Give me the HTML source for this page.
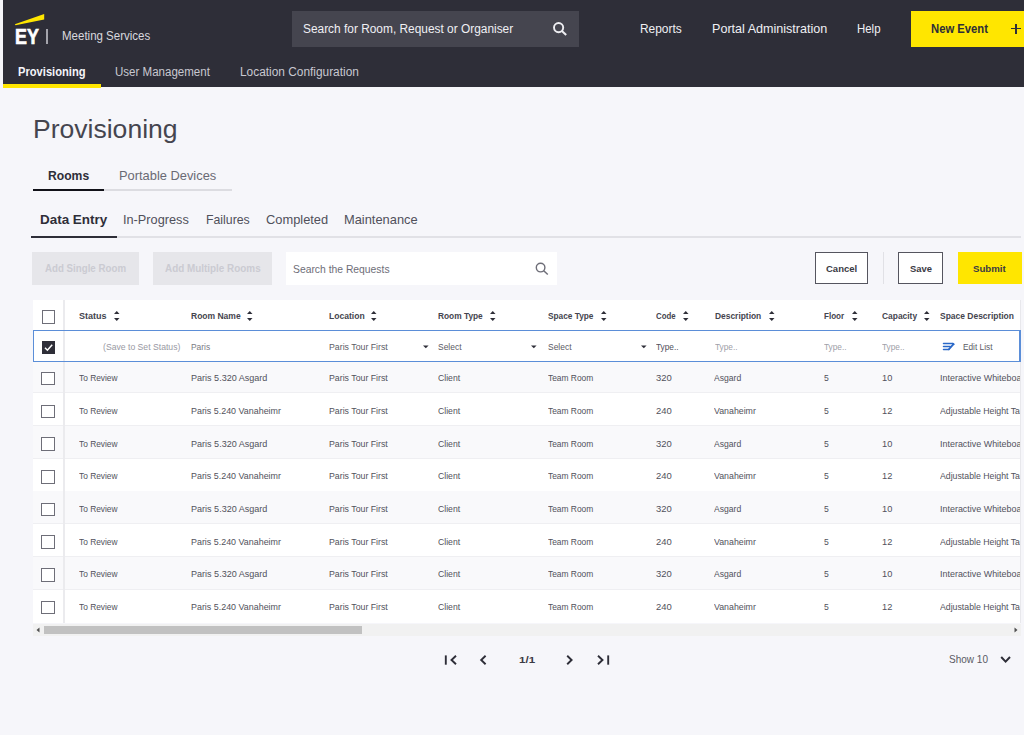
<!DOCTYPE html>
<html><head><meta charset="utf-8"><title>Provisioning</title>
<style>
html,body{margin:0;padding:0}
body{width:1024px;height:735px;overflow:hidden;position:relative;background:#f6f6fa;font-family:"Liberation Sans",sans-serif}
.t{position:absolute;white-space:nowrap;line-height:1;transform-origin:0 0}
</style></head><body>
<div style="position:absolute;left:3px;top:0px;width:1021px;height:87px;background:#2e2e38"></div>
<div style="position:absolute;left:3px;top:84px;width:97.5px;height:3.5px;background:#ffe600"></div>
<svg style="position:absolute;left:0;top:0" width="60" height="50"><polygon points="14.8,24.2 15.6,25.2 44.2,19.6 44.2,13.9" fill="#ffe600"/></svg>
<div class="t" style="left:14.60px;top:26.00px;font-size:21.80px;color:#ffffff;font-weight:700;transform:scaleX(0.8183);-webkit-text-stroke:0.7px #fff;">EY</div>
<div style="position:absolute;left:46.3px;top:29.3px;width:1.8px;height:14.4px;background:#a4a4ac"></div>
<div class="t" style="left:62.00px;top:30.00px;font-size:12.79px;color:#d8d8de;transform:scaleX(0.9001);">Meeting Services</div>
<div style="position:absolute;left:291.7px;top:11px;width:287px;height:36px;background:#45454f"></div>
<div class="t" style="left:303.40px;top:22.00px;font-size:13.08px;color:#f0f0f4;transform:scaleX(0.9092);">Search for Room, Request or Organiser</div>
<svg style="position:absolute;left:550px;top:19px" width="22" height="20"><circle cx="8.6" cy="8.6" r="4.6" fill="none" stroke="#eeeef2" stroke-width="1.9"/><line x1="11.9" y1="11.9" x2="16.2" y2="15.9" stroke="#eeeef2" stroke-width="2"/></svg>
<div class="t" style="left:639.70px;top:23.00px;font-size:12.94px;color:#f0f0f4;transform:scaleX(0.9208);">Reports</div>
<div class="t" style="left:711.70px;top:23.00px;font-size:12.94px;color:#f0f0f4;transform:scaleX(0.9719);">Portal Administration</div>
<div class="t" style="left:857.20px;top:23.00px;font-size:12.94px;color:#f0f0f4;transform:scaleX(0.8831);">Help</div>
<div style="position:absolute;left:910.5px;top:10.6px;width:113.5px;height:36.4px;background:#ffe600"></div>
<div class="t" style="left:931.00px;top:23.00px;font-size:12.94px;color:#2e2e38;font-weight:700;transform:scaleX(0.8713);">New Event</div>
<div style="position:absolute;left:1011px;top:28.3px;width:10px;height:1.2px;background:#2e2e38"></div>
<div style="position:absolute;left:1015.4px;top:24px;width:1.2px;height:10px;background:#2e2e38"></div>
<div class="t" style="left:18.00px;top:66.00px;font-size:12.21px;color:#f4f4f8;font-weight:700;transform:scaleX(0.9143);">Provisioning</div>
<div class="t" style="left:114.80px;top:66.00px;font-size:12.21px;color:#c8c8d0;transform:scaleX(0.9449);">User Management</div>
<div class="t" style="left:240.30px;top:66.00px;font-size:12.21px;color:#c8c8d0;transform:scaleX(0.9732);">Location Configuration</div>
<div class="t" style="left:32.80px;top:116.00px;font-size:26.31px;color:#45454f;transform:scaleX(1.0091);">Provisioning</div>
<div class="t" style="left:47.60px;top:169.00px;font-size:13.37px;color:#2e2e38;font-weight:700;transform:scaleX(0.9091);">Rooms</div>
<div class="t" style="left:118.90px;top:169.00px;font-size:13.37px;color:#6a6a74;transform:scaleX(0.9626);">Portable Devices</div>
<div style="position:absolute;left:103.8px;top:189px;width:128.2px;height:1.7px;background:#dcdce1"></div>
<div style="position:absolute;left:33px;top:188.6px;width:71px;height:2.5px;background:#111118"></div>
<div class="t" style="left:40.00px;top:213.00px;font-size:13.37px;color:#2e2e38;font-weight:700;transform:scaleX(1.0062);">Data Entry</div>
<div class="t" style="left:123.40px;top:213.00px;font-size:13.37px;color:#50505a;transform:scaleX(0.9534);">In-Progress</div>
<div class="t" style="left:205.60px;top:213.00px;font-size:13.37px;color:#50505a;transform:scaleX(0.9209);">Failures</div>
<div class="t" style="left:265.80px;top:213.00px;font-size:13.37px;color:#50505a;transform:scaleX(0.9618);">Completed</div>
<div class="t" style="left:343.70px;top:213.00px;font-size:13.37px;color:#50505a;transform:scaleX(0.9625);">Maintenance</div>
<div style="position:absolute;left:117px;top:236.2px;width:904px;height:1.4px;background:#e1e1e6"></div>
<div style="position:absolute;left:31px;top:235.5px;width:86.4px;height:2.8px;background:#2e2e38"></div>
<div style="position:absolute;left:31.8px;top:251.8px;width:107.2px;height:32.8px;background:#e6e6ea"></div>
<div class="t" style="left:45.00px;top:264.00px;font-size:10.47px;color:#cbcbd2;font-weight:700;transform:scaleX(0.9288);">Add Single Room</div>
<div style="position:absolute;left:153px;top:251.8px;width:119px;height:32.8px;background:#e6e6ea"></div>
<div class="t" style="left:165.00px;top:264.00px;font-size:10.47px;color:#cbcbd2;font-weight:700;transform:scaleX(0.9451);">Add Multiple Rooms</div>
<div style="position:absolute;left:286.4px;top:252.3px;width:270.5px;height:32.5px;background:#ffffff"></div>
<div class="t" style="left:293.20px;top:264.00px;font-size:11.48px;color:#6e6e78;transform:scaleX(0.9018);">Search the Requests</div>
<svg style="position:absolute;left:533px;top:260px" width="20" height="18"><circle cx="7.6" cy="7.6" r="4.3" fill="none" stroke="#6e6e78" stroke-width="1.4"/><line x1="10.7" y1="10.7" x2="14.8" y2="14.5" stroke="#6e6e78" stroke-width="1.5"/></svg>
<div style="position:absolute;left:814.5px;top:252.3px;width:53.9px;height:32.1px;background:#fff;box-sizing:border-box;border:1px solid #55555f"></div>
<div class="t" style="left:825.80px;top:264.00px;font-size:9.74px;color:#3a3a44;font-weight:700;transform:scaleX(0.9771);">Cancel</div>
<div style="position:absolute;left:882.6px;top:252.3px;width:1.2px;height:32px;background:#e1e1e6"></div>
<div style="position:absolute;left:898px;top:252.3px;width:45.4px;height:32.1px;background:#fff;box-sizing:border-box;border:1px solid #55555f"></div>
<div class="t" style="left:909.80px;top:264.00px;font-size:9.74px;color:#3a3a44;font-weight:700;transform:scaleX(0.9675);">Save</div>
<div style="position:absolute;left:958px;top:252.3px;width:63.5px;height:32.1px;background:#ffe600"></div>
<div class="t" style="left:973.20px;top:264.00px;font-size:9.74px;color:#3a3a44;font-weight:700;transform:scaleX(0.9938);">Submit</div>
<div style="position:absolute;left:33px;top:300px;width:988px;height:322.8px;background:#ffffff"></div>
<div style="position:absolute;left:33px;top:360.6px;width:988px;height:32.7px;background:#f9f9fb"></div>
<div style="position:absolute;left:33px;top:392.40000000000003px;width:988px;height:1px;background:#efeff2"></div>
<div style="position:absolute;left:33px;top:425.1px;width:988px;height:1px;background:#efeff2"></div>
<div style="position:absolute;left:33px;top:426.0px;width:988px;height:32.7px;background:#f9f9fb"></div>
<div style="position:absolute;left:33px;top:457.8px;width:988px;height:1px;background:#efeff2"></div>
<div style="position:absolute;left:33px;top:490.50000000000006px;width:988px;height:1px;background:#efeff2"></div>
<div style="position:absolute;left:33px;top:491.40000000000003px;width:988px;height:32.7px;background:#f9f9fb"></div>
<div style="position:absolute;left:33px;top:523.2px;width:988px;height:1px;background:#efeff2"></div>
<div style="position:absolute;left:33px;top:555.9000000000001px;width:988px;height:1px;background:#efeff2"></div>
<div style="position:absolute;left:33px;top:556.8000000000001px;width:988px;height:32.7px;background:#f9f9fb"></div>
<div style="position:absolute;left:33px;top:588.6000000000001px;width:988px;height:1px;background:#efeff2"></div>
<div style="position:absolute;left:62.8px;top:300px;width:1.8px;height:323px;background:#ebebee"></div>
<div style="position:absolute;left:33px;top:330px;width:988px;height:32.4px;box-sizing:border-box;border:1.4px solid #5b8ed8;background:#fff"></div>
<div style="position:absolute;left:62.8px;top:331.4px;width:1.8px;height:29.6px;background:#ebebee"></div>
<div style="position:absolute;left:41.6px;top:310.2px;width:13.4px;height:13.6px;box-sizing:border-box;border:1.4px solid #6e6e78;background:#fff"></div>
<div class="t" style="left:78.60px;top:311.00px;font-size:9.88px;color:#44444e;font-weight:700;transform:scaleX(0.9138);">Status</div>
<svg style="position:absolute;left:112.6px;top:310px" width="8" height="12"><polygon points="1,4 6.5,4 3.75,1" fill="#2e2e38"/><polygon points="1,8 6.5,8 3.75,11" fill="#2e2e38"/></svg>
<div class="t" style="left:190.60px;top:311.00px;font-size:9.88px;color:#44444e;font-weight:700;transform:scaleX(0.8619);">Room Name</div>
<svg style="position:absolute;left:246px;top:310px" width="8" height="12"><polygon points="1,4 6.5,4 3.75,1" fill="#2e2e38"/><polygon points="1,8 6.5,8 3.75,11" fill="#2e2e38"/></svg>
<div class="t" style="left:329.00px;top:311.00px;font-size:9.88px;color:#44444e;font-weight:700;transform:scaleX(0.8668);">Location</div>
<svg style="position:absolute;left:370px;top:310px" width="8" height="12"><polygon points="1,4 6.5,4 3.75,1" fill="#2e2e38"/><polygon points="1,8 6.5,8 3.75,11" fill="#2e2e38"/></svg>
<div class="t" style="left:438.00px;top:311.00px;font-size:9.88px;color:#44444e;font-weight:700;transform:scaleX(0.8439);">Room Type</div>
<svg style="position:absolute;left:489px;top:310px" width="8" height="12"><polygon points="1,4 6.5,4 3.75,1" fill="#2e2e38"/><polygon points="1,8 6.5,8 3.75,11" fill="#2e2e38"/></svg>
<div class="t" style="left:547.50px;top:311.00px;font-size:9.88px;color:#44444e;font-weight:700;transform:scaleX(0.8394);">Space Type</div>
<svg style="position:absolute;left:599.6px;top:310px" width="8" height="12"><polygon points="1,4 6.5,4 3.75,1" fill="#2e2e38"/><polygon points="1,8 6.5,8 3.75,11" fill="#2e2e38"/></svg>
<div class="t" style="left:656.00px;top:311.00px;font-size:9.88px;color:#44444e;font-weight:700;transform:scaleX(0.7932);">Code</div>
<svg style="position:absolute;left:681.8px;top:310px" width="8" height="12"><polygon points="1,4 6.5,4 3.75,1" fill="#2e2e38"/><polygon points="1,8 6.5,8 3.75,11" fill="#2e2e38"/></svg>
<div class="t" style="left:714.70px;top:311.00px;font-size:9.88px;color:#44444e;font-weight:700;transform:scaleX(0.8516);">Description</div>
<svg style="position:absolute;left:767.75px;top:310px" width="8" height="12"><polygon points="1,4 6.5,4 3.75,1" fill="#2e2e38"/><polygon points="1,8 6.5,8 3.75,11" fill="#2e2e38"/></svg>
<div class="t" style="left:823.75px;top:311.00px;font-size:9.88px;color:#44444e;font-weight:700;transform:scaleX(0.8175);">Floor</div>
<svg style="position:absolute;left:850.6px;top:310px" width="8" height="12"><polygon points="1,4 6.5,4 3.75,1" fill="#2e2e38"/><polygon points="1,8 6.5,8 3.75,11" fill="#2e2e38"/></svg>
<div class="t" style="left:881.90px;top:311.00px;font-size:9.88px;color:#44444e;font-weight:700;transform:scaleX(0.8520);">Capacity</div>
<svg style="position:absolute;left:923.1px;top:310px" width="8" height="12"><polygon points="1,4 6.5,4 3.75,1" fill="#2e2e38"/><polygon points="1,8 6.5,8 3.75,11" fill="#2e2e38"/></svg>
<div class="t" style="left:939.80px;top:311.00px;font-size:9.88px;color:#44444e;font-weight:700;transform:scaleX(0.8581);">Space Description</div>
<div style="position:absolute;left:41.6px;top:341px;width:13px;height:13px;background:#2e2e38"></div>
<svg style="position:absolute;left:41.6px;top:341px" width="13" height="13"><polyline points="3,6.8 5.4,9.2 10.2,3.8" fill="none" stroke="#fff" stroke-width="1.5"/></svg>
<div class="t" style="left:103.10px;top:342.00px;font-size:9.74px;color:#9a9aa4;transform:scaleX(0.8881);">(Save to Set Status)</div>
<div class="t" style="left:190.60px;top:342.00px;font-size:9.74px;color:#7a7a84;transform:scaleX(0.8655);">Paris</div>
<div class="t" style="left:329.00px;top:342.00px;font-size:9.74px;color:#5c5c66;transform:scaleX(0.9005);">Paris Tour First</div>
<div class="t" style="left:438.00px;top:342.00px;font-size:9.74px;color:#5c5c66;transform:scaleX(0.8683);">Select</div>
<div class="t" style="left:547.50px;top:342.00px;font-size:9.74px;color:#5c5c66;transform:scaleX(0.8683);">Select</div>
<div class="t" style="left:656.40px;top:342.00px;font-size:9.74px;color:#50505a;transform:scaleX(0.8520);">Type..</div>
<div class="t" style="left:714.80px;top:342.00px;font-size:9.74px;color:#a0a0a8;transform:scaleX(0.8520);">Type..</div>
<div class="t" style="left:823.50px;top:342.00px;font-size:9.74px;color:#a0a0a8;transform:scaleX(0.8520);">Type..</div>
<div class="t" style="left:881.70px;top:342.00px;font-size:9.74px;color:#a0a0a8;transform:scaleX(0.8520);">Type..</div>
<svg style="position:absolute;left:422.5px;top:343.8px" width="7" height="6"><polygon points="0,1.4 5.6,1.4 2.8,4.2" fill="#2e2e38"/></svg>
<svg style="position:absolute;left:531px;top:343.8px" width="7" height="6"><polygon points="0,1.4 5.6,1.4 2.8,4.2" fill="#2e2e38"/></svg>
<svg style="position:absolute;left:640.6px;top:343.8px" width="7" height="6"><polygon points="0,1.4 5.6,1.4 2.8,4.2" fill="#2e2e38"/></svg>
<svg style="position:absolute;left:938px;top:336px" width="20" height="18"><g stroke="#2a68c8" stroke-width="1.5" stroke-linecap="round" fill="none"><line x1="5.5" y1="7.6" x2="15" y2="7.6"/><line x1="5.5" y1="10.6" x2="12.2" y2="10.6"/><line x1="5.5" y1="13.6" x2="10.8" y2="13.6"/><line x1="15.5" y1="8.2" x2="10.8" y2="13.4" stroke-width="1.8"/></g><polygon points="14.6,6.7 17,8.2 14.6,9.4" fill="#2a68c8"/></svg>
<div class="t" style="left:962.60px;top:342.00px;font-size:9.74px;color:#5c5c66;transform:scaleX(0.8500);">Edit List</div>
<div style="position:absolute;left:41.4px;top:371.90000000000003px;width:13.4px;height:13.6px;box-sizing:border-box;border:1.4px solid #6e6e78;background:#fff"></div>
<div class="t" style="left:79.00px;top:373.00px;font-size:9.74px;color:#52525c;transform:scaleX(0.8587);">To Review</div>
<div class="t" style="left:190.70px;top:373.00px;font-size:9.74px;color:#52525c;transform:scaleX(0.9284);">Paris 5.320 Asgard</div>
<div class="t" style="left:328.90px;top:373.00px;font-size:9.74px;color:#52525c;transform:scaleX(0.9005);">Paris Tour First</div>
<div class="t" style="left:438.00px;top:373.00px;font-size:9.74px;color:#52525c;transform:scaleX(0.8875);">Client</div>
<div class="t" style="left:547.50px;top:373.00px;font-size:9.74px;color:#52525c;transform:scaleX(0.8629);">Team Room</div>
<div class="t" style="left:655.90px;top:373.00px;font-size:9.74px;color:#52525c;transform:scaleX(0.9727);">320</div>
<div class="t" style="left:714.30px;top:373.00px;font-size:9.74px;color:#52525c;transform:scaleX(0.8817);">Asgard</div>
<div class="t" style="left:823.50px;top:373.00px;font-size:9.74px;color:#52525c;transform:scaleX(0.8865);">5</div>
<div class="t" style="left:881.70px;top:373.00px;font-size:9.74px;color:#52525c;transform:scaleX(0.9511);">10</div>
<div class="t" style="left:939.70px;top:373.00px;font-size:9.74px;color:#52525c;transform:scaleX(0.9180);">Interactive Whiteboard</div>
<div style="position:absolute;left:41.4px;top:404.6px;width:13.4px;height:13.6px;box-sizing:border-box;border:1.4px solid #6e6e78;background:#fff"></div>
<div class="t" style="left:79.00px;top:406.00px;font-size:9.74px;color:#52525c;transform:scaleX(0.8587);">To Review</div>
<div class="t" style="left:190.70px;top:406.00px;font-size:9.74px;color:#52525c;transform:scaleX(0.9152);">Paris 5.240 Vanaheimr</div>
<div class="t" style="left:328.90px;top:406.00px;font-size:9.74px;color:#52525c;transform:scaleX(0.9005);">Paris Tour First</div>
<div class="t" style="left:438.00px;top:406.00px;font-size:9.74px;color:#52525c;transform:scaleX(0.8875);">Client</div>
<div class="t" style="left:547.50px;top:406.00px;font-size:9.74px;color:#52525c;transform:scaleX(0.8629);">Team Room</div>
<div class="t" style="left:655.90px;top:406.00px;font-size:9.74px;color:#52525c;transform:scaleX(0.9727);">240</div>
<div class="t" style="left:714.30px;top:406.00px;font-size:9.74px;color:#52525c;transform:scaleX(0.9035);">Vanaheimr</div>
<div class="t" style="left:823.50px;top:406.00px;font-size:9.74px;color:#52525c;transform:scaleX(0.8865);">5</div>
<div class="t" style="left:881.70px;top:406.00px;font-size:9.74px;color:#52525c;transform:scaleX(0.9511);">12</div>
<div class="t" style="left:939.70px;top:406.00px;font-size:9.74px;color:#52525c;transform:scaleX(0.8973);">Adjustable Height Table</div>
<div style="position:absolute;left:41.4px;top:437.3px;width:13.4px;height:13.6px;box-sizing:border-box;border:1.4px solid #6e6e78;background:#fff"></div>
<div class="t" style="left:79.00px;top:439.00px;font-size:9.74px;color:#52525c;transform:scaleX(0.8587);">To Review</div>
<div class="t" style="left:190.70px;top:439.00px;font-size:9.74px;color:#52525c;transform:scaleX(0.9284);">Paris 5.320 Asgard</div>
<div class="t" style="left:328.90px;top:439.00px;font-size:9.74px;color:#52525c;transform:scaleX(0.9005);">Paris Tour First</div>
<div class="t" style="left:438.00px;top:439.00px;font-size:9.74px;color:#52525c;transform:scaleX(0.8875);">Client</div>
<div class="t" style="left:547.50px;top:439.00px;font-size:9.74px;color:#52525c;transform:scaleX(0.8629);">Team Room</div>
<div class="t" style="left:655.90px;top:439.00px;font-size:9.74px;color:#52525c;transform:scaleX(0.9727);">320</div>
<div class="t" style="left:714.30px;top:439.00px;font-size:9.74px;color:#52525c;transform:scaleX(0.8817);">Asgard</div>
<div class="t" style="left:823.50px;top:439.00px;font-size:9.74px;color:#52525c;transform:scaleX(0.8865);">5</div>
<div class="t" style="left:881.70px;top:439.00px;font-size:9.74px;color:#52525c;transform:scaleX(0.9511);">10</div>
<div class="t" style="left:939.70px;top:439.00px;font-size:9.74px;color:#52525c;transform:scaleX(0.9180);">Interactive Whiteboard</div>
<div style="position:absolute;left:41.4px;top:470.00000000000006px;width:13.4px;height:13.6px;box-sizing:border-box;border:1.4px solid #6e6e78;background:#fff"></div>
<div class="t" style="left:79.00px;top:471.00px;font-size:9.74px;color:#52525c;transform:scaleX(0.8587);">To Review</div>
<div class="t" style="left:190.70px;top:471.00px;font-size:9.74px;color:#52525c;transform:scaleX(0.9152);">Paris 5.240 Vanaheimr</div>
<div class="t" style="left:328.90px;top:471.00px;font-size:9.74px;color:#52525c;transform:scaleX(0.9005);">Paris Tour First</div>
<div class="t" style="left:438.00px;top:471.00px;font-size:9.74px;color:#52525c;transform:scaleX(0.8875);">Client</div>
<div class="t" style="left:547.50px;top:471.00px;font-size:9.74px;color:#52525c;transform:scaleX(0.8629);">Team Room</div>
<div class="t" style="left:655.90px;top:471.00px;font-size:9.74px;color:#52525c;transform:scaleX(0.9727);">240</div>
<div class="t" style="left:714.30px;top:471.00px;font-size:9.74px;color:#52525c;transform:scaleX(0.9035);">Vanaheimr</div>
<div class="t" style="left:823.50px;top:471.00px;font-size:9.74px;color:#52525c;transform:scaleX(0.8865);">5</div>
<div class="t" style="left:881.70px;top:471.00px;font-size:9.74px;color:#52525c;transform:scaleX(0.9511);">12</div>
<div class="t" style="left:939.70px;top:471.00px;font-size:9.74px;color:#52525c;transform:scaleX(0.8973);">Adjustable Height Table</div>
<div style="position:absolute;left:41.4px;top:502.70000000000005px;width:13.4px;height:13.6px;box-sizing:border-box;border:1.4px solid #6e6e78;background:#fff"></div>
<div class="t" style="left:79.00px;top:504.00px;font-size:9.74px;color:#52525c;transform:scaleX(0.8587);">To Review</div>
<div class="t" style="left:190.70px;top:504.00px;font-size:9.74px;color:#52525c;transform:scaleX(0.9284);">Paris 5.320 Asgard</div>
<div class="t" style="left:328.90px;top:504.00px;font-size:9.74px;color:#52525c;transform:scaleX(0.9005);">Paris Tour First</div>
<div class="t" style="left:438.00px;top:504.00px;font-size:9.74px;color:#52525c;transform:scaleX(0.8875);">Client</div>
<div class="t" style="left:547.50px;top:504.00px;font-size:9.74px;color:#52525c;transform:scaleX(0.8629);">Team Room</div>
<div class="t" style="left:655.90px;top:504.00px;font-size:9.74px;color:#52525c;transform:scaleX(0.9727);">320</div>
<div class="t" style="left:714.30px;top:504.00px;font-size:9.74px;color:#52525c;transform:scaleX(0.8817);">Asgard</div>
<div class="t" style="left:823.50px;top:504.00px;font-size:9.74px;color:#52525c;transform:scaleX(0.8865);">5</div>
<div class="t" style="left:881.70px;top:504.00px;font-size:9.74px;color:#52525c;transform:scaleX(0.9511);">10</div>
<div class="t" style="left:939.70px;top:504.00px;font-size:9.74px;color:#52525c;transform:scaleX(0.9180);">Interactive Whiteboard</div>
<div style="position:absolute;left:41.4px;top:535.4px;width:13.4px;height:13.6px;box-sizing:border-box;border:1.4px solid #6e6e78;background:#fff"></div>
<div class="t" style="left:79.00px;top:537.00px;font-size:9.74px;color:#52525c;transform:scaleX(0.8587);">To Review</div>
<div class="t" style="left:190.70px;top:537.00px;font-size:9.74px;color:#52525c;transform:scaleX(0.9152);">Paris 5.240 Vanaheimr</div>
<div class="t" style="left:328.90px;top:537.00px;font-size:9.74px;color:#52525c;transform:scaleX(0.9005);">Paris Tour First</div>
<div class="t" style="left:438.00px;top:537.00px;font-size:9.74px;color:#52525c;transform:scaleX(0.8875);">Client</div>
<div class="t" style="left:547.50px;top:537.00px;font-size:9.74px;color:#52525c;transform:scaleX(0.8629);">Team Room</div>
<div class="t" style="left:655.90px;top:537.00px;font-size:9.74px;color:#52525c;transform:scaleX(0.9727);">240</div>
<div class="t" style="left:714.30px;top:537.00px;font-size:9.74px;color:#52525c;transform:scaleX(0.9035);">Vanaheimr</div>
<div class="t" style="left:823.50px;top:537.00px;font-size:9.74px;color:#52525c;transform:scaleX(0.8865);">5</div>
<div class="t" style="left:881.70px;top:537.00px;font-size:9.74px;color:#52525c;transform:scaleX(0.9511);">12</div>
<div class="t" style="left:939.70px;top:537.00px;font-size:9.74px;color:#52525c;transform:scaleX(0.8973);">Adjustable Height Table</div>
<div style="position:absolute;left:41.4px;top:568.1px;width:13.4px;height:13.6px;box-sizing:border-box;border:1.4px solid #6e6e78;background:#fff"></div>
<div class="t" style="left:79.00px;top:569.00px;font-size:9.74px;color:#52525c;transform:scaleX(0.8587);">To Review</div>
<div class="t" style="left:190.70px;top:569.00px;font-size:9.74px;color:#52525c;transform:scaleX(0.9284);">Paris 5.320 Asgard</div>
<div class="t" style="left:328.90px;top:569.00px;font-size:9.74px;color:#52525c;transform:scaleX(0.9005);">Paris Tour First</div>
<div class="t" style="left:438.00px;top:569.00px;font-size:9.74px;color:#52525c;transform:scaleX(0.8875);">Client</div>
<div class="t" style="left:547.50px;top:569.00px;font-size:9.74px;color:#52525c;transform:scaleX(0.8629);">Team Room</div>
<div class="t" style="left:655.90px;top:569.00px;font-size:9.74px;color:#52525c;transform:scaleX(0.9727);">320</div>
<div class="t" style="left:714.30px;top:569.00px;font-size:9.74px;color:#52525c;transform:scaleX(0.8817);">Asgard</div>
<div class="t" style="left:823.50px;top:569.00px;font-size:9.74px;color:#52525c;transform:scaleX(0.8865);">5</div>
<div class="t" style="left:881.70px;top:569.00px;font-size:9.74px;color:#52525c;transform:scaleX(0.9511);">10</div>
<div class="t" style="left:939.70px;top:569.00px;font-size:9.74px;color:#52525c;transform:scaleX(0.9180);">Interactive Whiteboard</div>
<div style="position:absolute;left:41.4px;top:600.8px;width:13.4px;height:13.6px;box-sizing:border-box;border:1.4px solid #6e6e78;background:#fff"></div>
<div class="t" style="left:79.00px;top:602.00px;font-size:9.74px;color:#52525c;transform:scaleX(0.8587);">To Review</div>
<div class="t" style="left:190.70px;top:602.00px;font-size:9.74px;color:#52525c;transform:scaleX(0.9152);">Paris 5.240 Vanaheimr</div>
<div class="t" style="left:328.90px;top:602.00px;font-size:9.74px;color:#52525c;transform:scaleX(0.9005);">Paris Tour First</div>
<div class="t" style="left:438.00px;top:602.00px;font-size:9.74px;color:#52525c;transform:scaleX(0.8875);">Client</div>
<div class="t" style="left:547.50px;top:602.00px;font-size:9.74px;color:#52525c;transform:scaleX(0.8629);">Team Room</div>
<div class="t" style="left:655.90px;top:602.00px;font-size:9.74px;color:#52525c;transform:scaleX(0.9727);">240</div>
<div class="t" style="left:714.30px;top:602.00px;font-size:9.74px;color:#52525c;transform:scaleX(0.9035);">Vanaheimr</div>
<div class="t" style="left:823.50px;top:602.00px;font-size:9.74px;color:#52525c;transform:scaleX(0.8865);">5</div>
<div class="t" style="left:881.70px;top:602.00px;font-size:9.74px;color:#52525c;transform:scaleX(0.9511);">12</div>
<div class="t" style="left:939.70px;top:602.00px;font-size:9.74px;color:#52525c;transform:scaleX(0.8973);">Adjustable Height Table</div>
<div style="position:absolute;left:1020.5px;top:300px;width:3.5px;height:336px;background:#f6f6fa"></div>
<div style="position:absolute;left:1020.3px;top:300px;width:0.8px;height:323px;background:#e8e8ec"></div>
<div style="position:absolute;left:1019.3px;top:330px;width:1.4px;height:32.4px;background:#5b8ed8"></div>
<div style="position:absolute;left:33px;top:624.4px;width:988px;height:11.2px;background:#f1f1f1"></div>
<div style="position:absolute;left:43.5px;top:626px;width:318.4px;height:8px;background:#c1c1c1"></div>
<svg style="position:absolute;left:35px;top:626px" width="6" height="8"><polygon points="4.5,1.5 4.5,6.5 1.5,4" fill="#505050"/></svg>
<svg style="position:absolute;left:1013px;top:626px" width="6" height="8"><polygon points="1.5,1.5 1.5,6.5 4.5,4" fill="#505050"/></svg>
<svg style="position:absolute;left:440px;top:650px" width="175" height="20" fill="none" stroke="#2e2e38" stroke-width="1.9">
<line x1="5.8" y1="5.4" x2="5.8" y2="14.7"/><polyline points="16,5.8 11.5,10 16,14.3"/>
<polyline points="45.6,5.8 41.2,10 45.6,14.3"/>
<polyline points="127.2,5.8 131.6,10 127.2,14.3"/>
<polyline points="158,5.8 162.5,10 158,14.3"/><line x1="168.2" y1="5.4" x2="168.2" y2="14.7"/>
</svg>
<div class="t" style="left:518.70px;top:655.00px;font-size:9.59px;color:#3c3c46;font-weight:700;transform:scaleX(1.2074);">1/1</div>
<div class="t" style="left:949.00px;top:654.00px;font-size:10.90px;color:#5a5a64;transform:scaleX(0.9192);">Show 10</div>
<svg style="position:absolute;left:999px;top:653px" width="14" height="12"><polyline points="2.2,4 6.6,8.6 11,4" fill="none" stroke="#2e2e38" stroke-width="2"/></svg>
</body></html>
